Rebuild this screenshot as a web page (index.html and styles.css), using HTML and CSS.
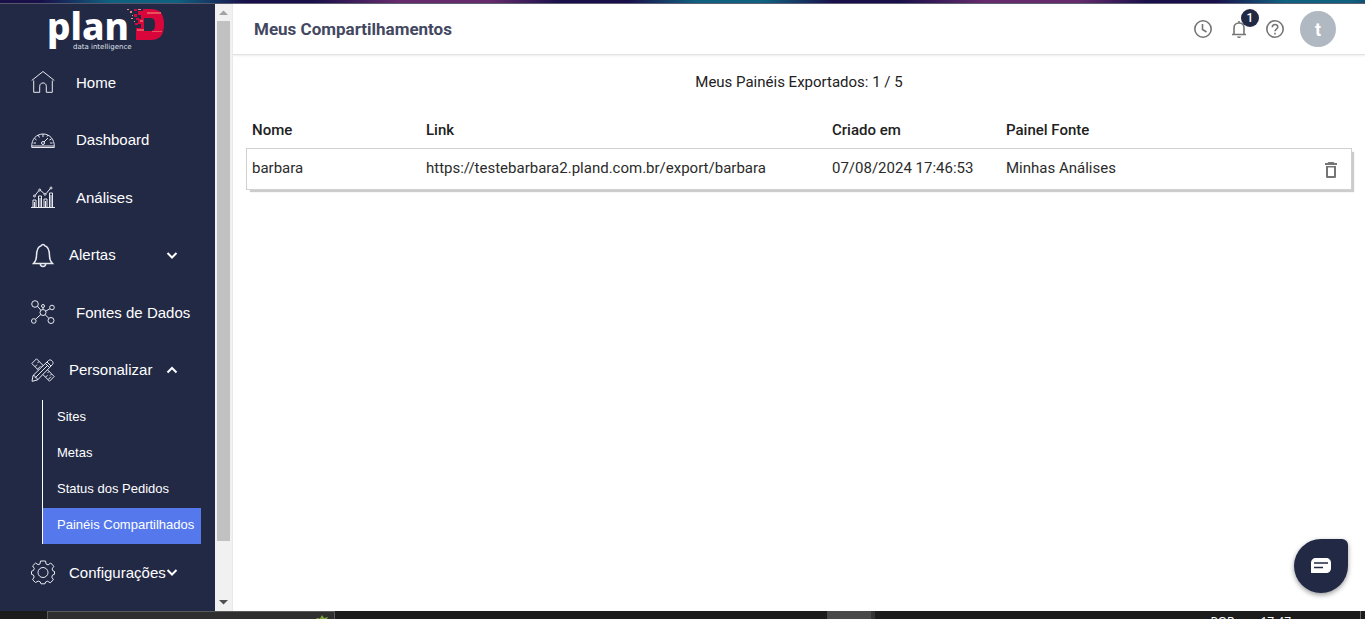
FILE: index.html
```html
<!DOCTYPE html>
<html lang="pt-BR">
<head>
<meta charset="utf-8">
<title>Meus Compartilhamentos</title>
<link rel="stylesheet" href="styles.css">
</head>
<body>
<div class="strip"></div>
<div class="app">
  <aside class="sidebar">
    <a class="logo" href="#" aria-label="planD data intelligence">
      <svg width="118" height="48" viewBox="48 6 118 48">
        <text class="logo-name" x="47" y="40">plan</text>
        <path fill="#d9063c" fill-rule="evenodd" d="M143 9h8c9 0 13 5 13 15 0 11-4 16-13 16h-15V28h5v-4h-3v-5h3v-4h-3v-4h5zM144 18v13h6c4 0 5-2 5-6.500S154 18 150 18z"/>
        <path fill="#e8505f" d="M147 12h14v2h-14zM137 29h7v2h-7zM152 31h10v1h-10zM140 20h3v2h-3z"/>
        <path fill="#d9063c" d="M134 9h3v2h-3zM134 14h3v3h-3zM136 18h3v2h-3zM135 23h3v2h-3z"/>
        <path fill="#e58a91" d="M127 9h2v1h-2zM130 11h2v2h-2zM132 15h1v1h-1zM131 18h2v1h-2zM134 21h1v1h-1zM138 9h3v1h-3z"/>
        <text class="logo-tag" x="73" y="49">data intelligence</text>
      </svg>
    </a>
    <nav class="nav">
      <div class="nav-main">
        <a class="nav-item" href="#">
          <svg class="icon" viewBox="0 0 24 24"><path d="M.7 10.500 12 1.500l11.300 9M2.700 10.500v11.800h6v-6c0-4.500 6.600-4.500 6.600 0v6h6V10.500"/></svg>
          <span>Home</span>
        </a>
        <a class="nav-item" href="#">
          <svg class="icon" viewBox="0 0 24 24"><path d="M.7 19.500c-1-18 23.600-18 22.600 0zM1 18h22M12 6v3M7 7l1.500 2.500M17 7l-1 1.500M3.500 10.500l2 1.500M20.500 11l-2 1M2.500 15H5M19 15h2.500M13 14l4-4"/><circle cx="12" cy="15" r="1.500"/></svg>
          <span>Dashboard</span>
        </a>
        <a class="nav-item" href="#">
          <svg class="icon" viewBox="0 0 24 24"><path d="M0 22.500h24M2 22v-7h3v7M7.500 22V11h3v11M13 22v-8h3v8M18.500 22V8h3v14M3.500 22v-5M9 22v-9M14.500 22v-6M20 22V10M4.200 10.200l3.600-4.500M9.700 5.500l3.500 3.200M15 8.700l4.300-5.200"/><circle cx="3.500" cy="11" r="1"/><circle cx="8.700" cy="5" r="1"/><circle cx="14" cy="9.300" r="1"/><circle cx="20" cy="3" r="1"/></svg>
          <span>Análises</span>
        </a>
        <button class="nav-item nav-group" type="button">
          <svg class="icon bold" viewBox="0 0 24 24"><path d="M2.500 20.500h19c-2.500-2.500-3-4-3-7.500 0-6-1.500-9.500-4.700-10.300a1.900 1.900 0 0 0-3.600 0C7 3.500 5.500 7 5.500 13c0 3.500-.5 5-3 7.500zM9.300 20.700a2.700 2.700 0 0 0 5.400 0"/></svg>
          <span>Alertas</span>
          <svg class="chev" viewBox="0 0 12 12"><path d="m1.500 4 4.500 4.500L10.500 4"/></svg>
        </button>
        <a class="nav-item" href="#">
          <svg class="icon" viewBox="0 0 24 24"><circle cx="4" cy="4" r="3.300"/><circle cx="12" cy="6" r="1.500"/><circle cx="21" cy="7.500" r="2.300"/><circle cx="12" cy="12.500" r="3"/><circle cx="2.800" cy="21" r="2.300"/><circle cx="20" cy="20.500" r="3"/><path d="m6.500 6.200 3.300 4M12 7.500v2M19 8.700l-4.400 2.500M4.500 19.300l5.300-4.800M14.200 14.700l3.600 3.600"/></svg>
          <span>Fontes de Dados</span>
        </a>
        <button class="nav-item nav-group" type="button" aria-expanded="true">
          <svg class="icon" viewBox="0 0 24 24"><path d="M.8 5.500 5.500.8l17.700 17.700-4.700 4.700zM4 8.700l2-2M6.500 11.200l3-3M14.500 19.200l2-2M17 21.700l3-3M8 3.500 6.500 5M12 7.500 10.500 9M18 13.500 16.500 15M20.500 16 19 17.500"/><path fill="#222945" d="m2 17.500 15.500-15c2-2 6 1.500 4 4L6.500 22l-5.500 1.300z"/><path d="m16 4 4 4M14.500 5.500l4 4M2 17.500c2 0 2.500 1 2.300 2.200 1.200-.2 2.200.8 2.200 2.300M4.300 19.700l12-12"/></svg>
          <span>Personalizar</span>
          <svg class="chev" viewBox="0 0 12 12"><path d="M1.500 8.500 6 4l4.500 4.500"/></svg>
        </button>
      </div>
      <div class="submenu">
        <a href="#">Sites</a>
        <a href="#">Metas</a>
        <a href="#">Status dos Pedidos</a>
        <a href="#" class="active" aria-current="page">Painéis Compartilhados</a>
      </div>
      <button class="nav-item nav-group" type="button">
        <svg class="icon" viewBox="0 0 24 24"><path d="M9.500 1h5l.6 3 2 .9L19.700 3l3.100 3.300-1.700 2.600.7 1.900 1.700.7v2.800l-2 .8-.7 2 1.600 2.700-3.200 3-2.600-1.600-2 .8-.6 1.800h-4l-.8-2-2-.7L4.500 22.500 1.600 19.700 3.200 17l-.8-2-1.900-.7v-3l2-.9.8-1.900-1.700-2.600L4.600 3l2.500 1.700 1.900-.8z"/><circle cx="12" cy="12.500" r="5"/></svg>
        <span>Configurações</span>
        <svg class="chev" viewBox="0 0 12 12"><path d="m1.500 4 4.500 4.500L10.500 4"/></svg>
      </button>
    </nav>
  </aside>
  <div class="scrollbar">
    <svg viewBox="0 0 17 17"><path fill="#a3a3a3" d="m4 11 4.500-4.500L13 11z"/></svg>
    <div class="thumb"></div>
    <svg viewBox="0 0 17 17"><path fill="#505050" d="m4 6 4.500 4.500L13 6z"/></svg>
  </div>
  <div class="page">
    <header class="header">
      <h1>Meus Compartilhamentos</h1>
      <div class="actions">
        <button type="button" aria-label="Histórico"><svg viewBox="0 0 18 18"><circle cx="9" cy="9" r="8.200"/><path d="M8.500 4v5.500l4 2.500"/></svg></button>
        <button type="button" aria-label="Notificações"><svg viewBox="0 0 18 18"><path d="M2 14.500h14M4 14V8c0-3 2-5 5-5s5 2 5 5v6M9 3V1"/><path d="M7 16.500h4c-.5 2-3.500 2-4 0z" fill="#757575" stroke="none"/></svg><span class="badge">1</span></button>
        <button type="button" aria-label="Ajuda"><svg viewBox="0 0 18 18"><circle cx="9" cy="9" r="8.200"/><path d="M6.300 7.200c0-3.700 5.500-3.600 5.500-.2 0 2-2.800 2.200-2.800 4.300M9 12.700v1.800"/></svg></button>
        <button type="button" class="avatar">t</button>
      </div>
    </header>
    <main class="content">
      <p class="count">Meus Painéis Exportados: 1 / 5</p>
      <table class="shares">
        <thead>
          <tr><th class="c-name">Nome</th><th class="c-link">Link</th><th class="c-date">Criado em</th><th>Painel Fonte</th><th class="c-del"></th></tr>
        </thead>
        <tbody>
          <tr><td>barbara</td><td>https://testebarbara2.pland.com.br/export/barbara</td><td>07/08/2024 17:46:53</td><td>Minhas Análises</td>
          <td><button class="delete" type="button" aria-label="Excluir"><svg viewBox="0 0 14 18"><path fill="#757575" fill-rule="evenodd" d="M4.500 1h5l1 1H13v2H1V2h2.500zM2 5h10v10.500c0 1-.5 1.500-1.500 1.500h-7c-1 0-1.500-.5-1.500-1.500zm2 1.500V15h6V6.500z"/></svg></button></td></tr>
        </tbody>
      </table>
    </main>
  </div>
</div>
<button class="chat" type="button" aria-label="Chat"><svg viewBox="0 0 20 16"><path fill="#fff" d="M5 0h10c3 0 5 2 5 5v5c0 3-2 5-5 5H1c-1 0-1-.5-1-1V5c0-3 2-5 5-5z"/><path stroke="#222945" stroke-width="1.500" d="M3 5h14M3 9.500h9"/></svg></button>
<footer class="taskbar">
  <div class="search"><svg viewBox="0 0 16 8"><path fill="#7fa53a" d="m0 8 3-3 3 .5L8 2l2 3 4-1-1 2 3 2z"/></svg></div>
  <div class="task"></div>
  <div class="tray"><span>POR</span><span>17:47</span></div>
</footer>
</body>
</html>
```
FILE: styles.css
```css
* { box-sizing: border-box; }
body {
  margin: 0;
  height: 100vh;
  display: flex;
  flex-direction: column;
  overflow: hidden;
  background: #fff;
  color: #212121;
  font-family: Roboto, "Liberation Sans", sans-serif;
  font-size: 15px;
}
a { color: inherit; text-decoration: none; }
button { border: 0; padding: 0; background: none; color: inherit; font: inherit; cursor: pointer; }

.strip {
  flex: none;
  height: 4px;
  border-bottom: 1px solid #55566c;
  background: repeating-linear-gradient(90deg, #19104a 0, #19104a 3%, #10607f 8%, #10607f 13%, #19104a 18%, #19104a 23%, #642a6b 29%, #642a6b 36%, #19104a 41%, #19104a 43%);
}
.app { flex: 1; min-height: 0; display: flex; }

.sidebar {
  flex: none;
  width: 215px;
  overflow: hidden;
  background: #222945;
  color: #fff;
  font-family: "Liberation Sans", Arial, sans-serif;
}
.logo { display: block; height: 54px; padding: 2px 0 0 48px; }
.logo svg { display: block; overflow: visible; }
.logo-name { fill: #fff; font: 800 37px "Noto Sans", sans-serif; }
.logo-tag { fill: #dfe1e8; font: 7px "DejaVu Sans", sans-serif; }

.nav-main { height: 336px; display: flex; flex-direction: column; justify-content: space-between; }
.nav-item {
  width: 100%;
  height: 48px;
  display: flex;
  align-items: center;
  gap: 21px;
  padding: 0 37px 0 31px;
  text-align: left;
}
.nav-group { gap: 14px; }
.nav-item span { flex: 1; white-space: nowrap; }
.nav-group span { min-width: 0; }
.icon { flex: none; width: 24px; height: 24px; fill: none; stroke: #e8eaf0; stroke-width: 1; overflow: visible; }
.icon.bold { stroke-width: 1.5; }
.chev { flex: none; width: 12px; height: 12px; margin-left: -14px; fill: none; stroke: #fff; stroke-width: 2; }

.submenu { margin: 6px 14px 4px 42px; border-left: 1px solid #fff; font-size: 13px; }
.submenu a { display: block; height: 36px; padding-left: 14px; line-height: 34px; white-space: nowrap; }
.submenu .active { background: #5579ed; }

.scrollbar {
  flex: none;
  width: 18px;
  display: flex;
  flex-direction: column;
  background: #f1f1f1;
  border-right: 1px solid #e8e8ec;
}
.scrollbar svg { flex: none; width: 17px; height: 17px; }
.thumb { flex: none; height: 88%; max-height: calc(100% - 87px); margin: 0 2px auto; background: #c1c1c1; }

.page { flex: 1; min-width: 0; }
.header {
  height: 51px;
  display: flex;
  align-items: center;
  justify-content: space-between;
  padding: 0 29px 0 21px;
  border-bottom: 1px solid #e2e2e2;
  box-shadow: 0 1px 2px #eee;
}
h1 { margin: 0; color: #434861; font-size: 17px; font-weight: 700; }
.actions { display: flex; align-items: center; gap: 18px; }
.actions button { position: relative; height: 18px; }
.actions svg { display: block; width: 18px; height: 18px; fill: none; stroke: #757575; stroke-width: 1.6; overflow: visible; }
.badge {
  position: absolute;
  left: 11px;
  top: -11px;
  width: 18px;
  height: 18px;
  border-radius: 50%;
  background: #222945;
  color: #fff;
  font-size: 12px;
  font-weight: 500;
  line-height: 18px;
  text-align: center;
}
.actions .avatar {
  width: 36px;
  height: 36px;
  margin-left: -2px;
  border-radius: 50%;
  background: #b0b8c1;
  color: #fff;
  font-size: 18px;
  font-weight: 700;
}

.content { padding: 0 13px; }
.count { margin: 17px 0 20px; line-height: 20px; text-align: center; }
.shares { width: 100%; table-layout: fixed; border-collapse: separate; border-spacing: 0; }
.shares th { height: 36px; padding: 0 6px; font-weight: 500; text-align: left; }
.shares td { height: 42px; padding: 0 6px 2px; border: solid #d0d0d0; border-width: 1px 0; white-space: nowrap; vertical-align: middle; color: #2b2b2b; }
.shares td:first-child { border-left-width: 1px; padding-left: 5px; }
.shares td:last-child { border-right-width: 1px; padding-bottom: 0; text-align: right; }
.shares tbody tr { box-shadow: 3px 3px 1px -1px #ccc; }
.c-name, .c-date { width: 174px; }
.c-link { width: 406px; }
.c-del { width: 60px; }
.delete { margin-right: 7px; vertical-align: middle; }
.delete svg { display: block; width: 14px; height: 18px; }

.chat {
  position: fixed;
  right: 17px;
  bottom: 26px;
  width: 54px;
  height: 54px;
  display: grid;
  place-items: center;
  border-radius: 50% 6px 50% 50%;
  background: #222945;
  box-shadow: 0 2px 5px rgba(0, 0, 0, .4);
}
.chat svg { width: 20px; height: 16px; }

.taskbar { flex: none; height: 8px; display: flex; overflow: hidden; background: #1c1c1c; }
.search { width: 288px; height: 12px; margin-left: 47px; border: 1px solid #5a5a5a; background: #2f2f2f; text-align: right; }
.search svg { display: block; width: 16px; height: 8px; margin: 1px 4px 0 auto; }
.task { width: 48px; margin-left: 492px; background: #4a4a4a; border-right: 4px solid #333; }
.tray {
  margin-left: auto;
  margin-right: 4px;
  padding: 3px 69px 0 0;
  display: flex;
  gap: 26px;
  border-right: 1px solid #666;
  color: #fff;
  font: 12px/16px "Open Sans", sans-serif;
}
```
